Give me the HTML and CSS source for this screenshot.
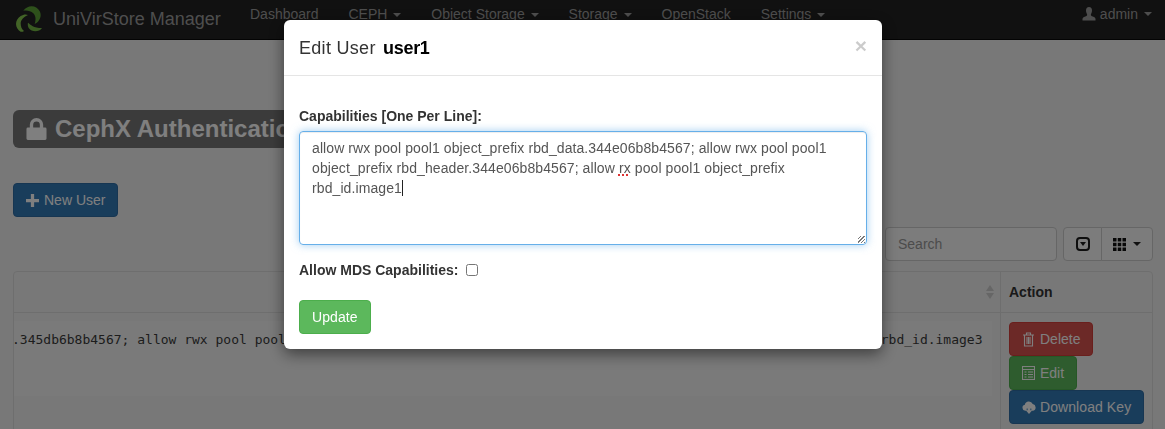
FILE: index.html
```html
<!DOCTYPE html>
<html lang="en">
<head>
<meta charset="utf-8">
<title>CephX Authentication</title>
<link rel="stylesheet" href="styles.css">
</head>
<body>
<nav class="navbar">
  <a class="brand">
    <svg class="logo" viewBox="45 15 81 84" width="27" height="28"><path d="M62 95C45 85 42 62 62 48C70 43 78 42 84 45C72 50 62 60 62 70C62 80 65 88 72 93C68 96 65 96 62 95Z" fill="#86c94f"/><path d="M70 32C82 15 108 12 120 35C126 50 118 66 104 72C108 60 108 48 100 40C92 32 80 30 70 32Z" fill="#5da337"/><path d="M84 68C92 74 100 84 126 84C118 96 96 98 86 84C83 78 83 72 84 68Z" fill="#74b845"/></svg>
    <span>UniVirStore Manager</span>
  </a>
  <ul class="nav">
    <li>Dashboard</li>
    <li>CEPH <i class="caret"></i></li>
    <li>Object Storage <i class="caret"></i></li>
    <li>Storage <i class="caret"></i></li>
    <li>OpenStack</li>
    <li>Settings <i class="caret"></i></li>
  </ul>
  <div class="nav-user">
    <svg viewBox="0 0 14 14" width="14" height="14" fill="currentColor"><path d="M7 0c2 0 3 1.500 3 3.500S9 7 8.800 7.800c0 1 .7 1.200 2 1.800 1.700.7 2.700 1.300 2.700 2.400v1.500H.5V12c0-1.100 1-1.700 2.700-2.400 1.300-.6 2-.8 2-1.800C5 7 4 5.500 4 3.500S5 0 7 0z"/></svg>
    <span>admin</span> <i class="caret"></i>
  </div>
</nav>

<main class="page">
  <h1 class="title">
    <svg viewBox="0 0 22 24" width="21" height="23" fill="currentColor"><path d="M4 10V7a7 7 0 0 1 14 0v3h2a1.500 1.500 0 0 1 1.500 1.500v10A1.500 1.500 0 0 1 20 23H2a1.500 1.500 0 0 1-1.500-1.500v-10A1.500 1.500 0 0 1 2 10zm3.500 0h7V7a3.500 3.500 0 0 0-7 0z"/></svg>
    <span>CephX Authentication</span>
  </h1>
  <button class="btn btn-blue new-user">
    <svg viewBox="0 0 12 12" width="13" height="13" fill="currentColor"><path d="M4.500 0h3v4.500H12v3H7.500V12h-3V7.500H0v-3h4.500z"/></svg>
    New User
  </button>
  <div class="toolbar">
    <input class="search" type="text" placeholder="Search">
    <div class="btn-group">
      <button class="tool">
        <svg viewBox="0 0 14 14" width="14" height="14"><rect x="1" y="1" width="12" height="12" rx="3" fill="none" stroke="#1c1c1c" stroke-width="2"/><path d="M4 5h6L7 9z" fill="#1c1c1c"/></svg>
      </button>
      <button class="tool tool-wide">
        <svg viewBox="0 0 13 13" width="13" height="13" fill="#111"><path d="M0 0h3.500v3.500H0zM4.750 0h3.500v3.500h-3.500zM9.500 0H13v3.500H9.500zM0 4.750h3.500v3.500H0zM4.750 4.750h3.500v3.500h-3.500zM9.500 4.750H13v3.500H9.500zM0 9.500h3.500V13H0zM4.750 9.500h3.500V13h-3.500zM9.500 9.500H13V13H9.500z"/></svg>
        <i class="caret dark"></i>
      </button>
    </div>
  </div>
  <div class="table">
    <div class="cell head main-col">
      <svg class="sort" viewBox="0 0 8 14" width="8" height="14" fill="#666"><path d="M4 0l4 6H0zM4 14l4-6H0z"/></svg>
    </div>
    <div class="cell head action-col">Action</div>
    <div class="cell main-col body-cell">
      <pre class="caps">.345db6b8b4567; allow rwx pool pool1 object_prefix rbd_header.345db6b8b4567; allow rx pool pool1 object_prefix rbd_id.image3</pre>
    </div>
    <div class="cell action-col actions">
      <button class="btn btn-red">
        <svg viewBox="0 0 13 15" width="13" height="15" fill="none" stroke="currentColor" stroke-width="1.100"><path d="M1 3h11M4.500 3V1h4v2M2.500 3v11h8V3M5 5v7M6.500 5v7M8 5v7"/></svg>
        Delete
      </button>
      <button class="btn btn-green">
        <svg viewBox="0 0 13 14" width="13" height="14" fill="none" stroke="currentColor" stroke-width="1.100"><rect x=".5" y=".5" width="12" height="13"/><path d="M.5 3.500h12M2.500 6h2M6 6h5M2.500 8.500h2M6 8.500h5M2.500 11h2M6 11h5"/></svg>
        Edit
      </button>
      <button class="btn btn-blue btn-key">
        <svg viewBox="0 0 15 14" width="14" height="13" fill="currentColor"><path d="M3.500 10.500A3.300 3.300 0 0 1 3 4a4.500 4.500 0 0 1 8.500-.7 3.700 3.700 0 0 1 .5 7.200H10V8H5v2.500z"/><path d="M6 6.500h3V10h2l-3.500 4L4 10h2z"/></svg>
        Download Key
      </button>
    </div>
  </div>
</main>

<div class="overlay">
  <section class="modal">
    <header class="modal-header">
      <h2>Edit User <b>user1</b></h2>
      <span class="close">×</span>
    </header>
    <form class="modal-body">
      <label class="field-label" for="caps">Capabilities [One Per Line]:</label>
      <div class="area" id="caps">allow rwx pool pool1 object_prefix rbd_data.344e06b8b4567; allow rwx pool pool1 object_prefix rbd_header.344e06b8b4567; allow <span class="spell">rx</span> pool pool1 object_prefix rbd_id.image1<span class="cursor"></span></div>
      <div class="check-row">
        <label class="field-label inline" for="mds">Allow MDS Capabilities:</label>
        <input id="mds" class="check" type="checkbox">
      </div>
      <button type="button" class="btn btn-update">Update</button>
    </form>
  </section>
</div>
</body>
</html>
```
FILE: styles.css
```css
* { box-sizing: border-box; }
html, body { margin: 0; height: 429px; overflow: hidden; }
body { background: #f0f0f0; font-family: "Liberation Sans", Arial, sans-serif; font-size: 14px; color: #333; }

.navbar { height: 40px; background: #222; border-bottom: 1px solid #080808; display: flex; align-items: flex-start; color: #9d9d9d; padding-left: 15px; }
.brand { display: flex; align-items: center; gap: 11px; font-size: 18px; height: 38px; width: 235px; }
.logo { flex: none; }
.nav { list-style: none; display: flex; margin: 0; padding: 0; gap: 30px; line-height: 28px; }
.nav-user { margin-left: auto; padding-right: 13px; line-height: 28px; display: flex; align-items: center; gap: 4px; height: 28px; }
.caret { display: inline-block; width: 0; height: 0; margin-left: 2px; vertical-align: middle; border-top: 4px solid; border-left: 4px solid transparent; border-right: 4px solid transparent; }
.caret.dark { color: #222; }

.page { padding: 70px 12px 0 13px; }
.title { margin: 0; display: inline-flex; align-items: center; gap: 8px; width: 460px; height: 38px; padding: 0 13px; background: #777; color: #fff; border-radius: 6px; font-size: 24px; font-weight: 700; white-space: nowrap; overflow: hidden; }
.btn { display: inline-flex; align-items: center; gap: 5px; height: 34px; padding: 0 12px; border: 1px solid transparent; border-radius: 4px; color: #fff; font: 14px "Liberation Sans", Arial, sans-serif; white-space: nowrap; }
.btn-blue { background: #337ab7; border-color: #2e6da4; }
.btn-red { background: #d9534f; border-color: #d43f3a; }
.btn-green { background: #5cb85c; border-color: #4cae4c; }
.btn-key { gap: 4px; letter-spacing: .08px; }
.new-user { display: flex; margin-top: 35px; }

.toolbar { display: flex; justify-content: flex-end; gap: 6px; margin-top: 10px; height: 34px; }
.search { width: 172px; height: 34px; padding: 6px 12px; border: 1px solid #ccc; border-radius: 4px; font: 14px "Liberation Sans", Arial, sans-serif; background: #f8f8f8; }
.search::placeholder { color: #999; opacity: 1; }
.btn-group { display: flex; }
.tool { width: 39px; height: 34px; background: #f8f8f8; border: 1px solid #ccc; border-radius: 4px 0 0 4px; display: flex; align-items: center; justify-content: center; gap: 5px; padding: 0; }
.tool-wide { width: 52px; margin-left: -1px; border-radius: 0 4px 4px 0; }

.table { display: grid; grid-template-columns: 986px 153px; margin-top: 10px; border: 1px solid #ddd; border-radius: 4px; }
.cell { border-left: 1px solid #ddd; }
.main-col { border-left: 0; }
.head { height: 41px; border-bottom: 1px solid #ddd; display: flex; align-items: center; font-weight: 700; }
.main-col.head { justify-content: flex-end; padding-right: 6px; }
.sort { opacity: .25; }
.action-col { padding-left: 8px; }
.body-cell { padding: 8px 8px 0 0; height: 160px; overflow: hidden; }
.caps { margin: 0; height: 75px; padding-top: 9.500px; background: #f5f5f5; font: 13px/18px "DejaVu Sans Mono", monospace; color: #3a3a3a; white-space: pre; text-indent: -2px; overflow: hidden; }
.actions { display: flex; flex-direction: column; align-items: flex-start; padding-top: 9px; }
.actions .btn { flex: none; }

.overlay { position: fixed; inset: 0; background: rgba(0, 0, 0, .5); display: flex; justify-content: center; align-items: flex-start; padding: 20px 0 0 1px; }
.modal { width: 598px; height: 329px; background: #fff; border-radius: 6px; box-shadow: 0 5px 15px rgba(0, 0, 0, .5); }
.modal-header { height: 56px; border-bottom: 1px solid #e5e5e5; display: flex; justify-content: space-between; padding: 15px; }
.modal-header h2 { margin: 0; font-size: 18px; font-weight: 400; line-height: 26px; letter-spacing: .3px; }
.modal-header b { margin-left: 2px; color: #000; letter-spacing: -.3px; }
.close { font-size: 21px; font-weight: 700; color: #000; opacity: .2; line-height: 22px; }
.modal-body { padding: 30px 15px 0; display: flex; flex-direction: column; align-items: flex-start; }
.field-label { font-weight: 700; line-height: 20px; }
.area { width: 568px; height: 114px; margin-top: 5px; padding: 6px 12px; border: 1px solid #66afe9; border-radius: 4px; box-shadow: inset 0 1px 1px rgba(0, 0, 0, .075), 0 0 8px rgba(102, 175, 233, .6); line-height: 20px; color: #555; letter-spacing: .09px; background: repeating-linear-gradient(135deg, transparent 0 1.500px, #777 1.500px 2.500px) right 1px bottom 1px / 7px 7px no-repeat; }
.spell { text-decoration: underline dotted #d33; text-decoration-thickness: 2px; }
.cursor { display: inline-block; width: 1px; height: 16px; background: #222; vertical-align: -3px; }
.check-row { display: flex; align-items: center; gap: 8px; margin-top: 15px; height: 20px; }
.check { margin: 0; width: 12px; height: 12px; }
.btn-update { margin-top: 20px; background: #5cb85c; border-color: #4cae4c; letter-spacing: .1px; }
```
